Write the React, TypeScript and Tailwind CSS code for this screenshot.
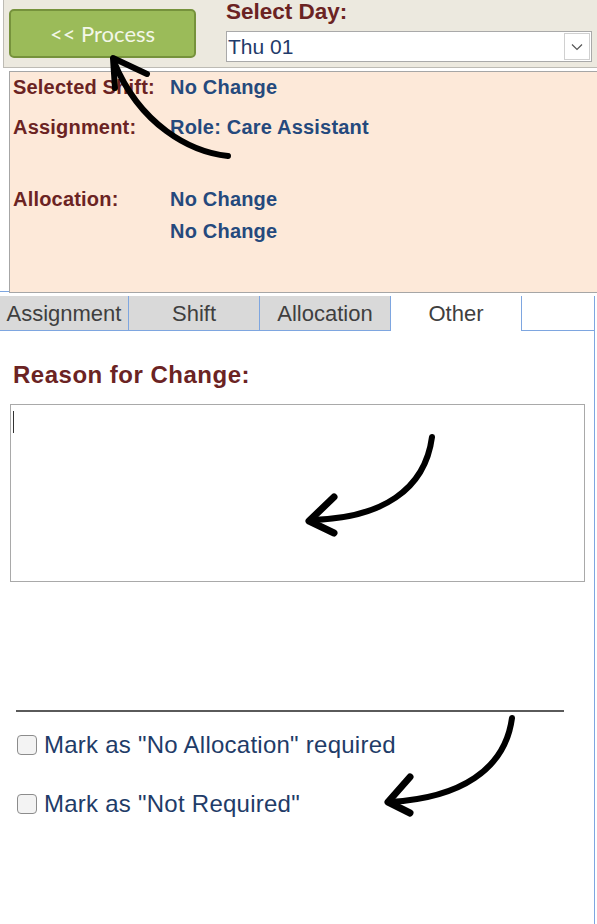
import React from "react";

const tabs = [
  { name: "Assignment", w: "w-[129px]" },
  { name: "Shift", w: "w-[131px]" },
  { name: "Allocation", w: "w-[131px]" },
];

// Annotation arrows drawn over the page
const Arrows: React.FC = () => (
  <svg
    className="pointer-events-none absolute left-0 top-0"
    width="597"
    height="924"
    viewBox="0 0 597 924"
    fill="none"
    stroke="black"
    strokeLinecap="round"
    strokeLinejoin="round"
  >
    <path d="M228 156 C 190 152, 140 125, 114 62" strokeWidth="6" />
    <path d="M147 74 L113 58 L115 88" strokeWidth="6" />
    <path d="M432 437 C 425 490, 382 518, 312 520" strokeWidth="6" />
    <path d="M334 497 L309 521 L334 533" strokeWidth="7" />
    <path d="M512 718 C 505 770, 460 798, 390 802" strokeWidth="6" />
    <path d="M410 777 L388 802 L410 813" strokeWidth="7" />
  </svg>
);

const Row: React.FC<{ label: string; value: string; className?: string }> = ({ label, value, className }) => (
  <div className={`flex h-[24px] items-center text-[20px] font-bold leading-[24px] tracking-[0.2px] ${className ?? ""}`}>
    <span className="w-[157px] shrink-0 text-[#6B2323]">{label}</span>
    <span className="text-[#25497D]">{value}</span>
  </div>
);

export default function App() {
  return (
    <div className="relative h-[924px] w-[597px] overflow-hidden bg-white font-['Liberation_Sans',Arial,sans-serif]">
      {/* Header */}
      <div className="ml-[3px] flex h-[68px] border-b border-l border-[#BDBBB4] bg-[#ECE9DF]">
        <button className="ml-[5px] mt-[9px] h-[49px] w-[187px] rounded-[5px] border-2 border-[#76923C] bg-[#9BBB59] font-['Lato',sans-serif] text-[22px] text-[#F3F7E8]">
          &lt;&lt; Process
        </button>
        <div className="ml-[30px] flex flex-col">
          <div className="h-[24px] text-[22.5px] font-bold leading-[24px] text-[#6B2323]">Select Day:</div>
          <div className="mt-[7px] flex h-[31px] w-[366px] items-center border border-[#A9A9A9] bg-white">
            <span className="flex-1 pl-[1px] text-[21px] leading-none text-[#1F3B6A]">Thu 01</span>
            <span className="mr-[1px] flex h-[27px] w-[26px] items-center justify-center border border-[#D0D0D0] bg-white">
              <svg width="12" height="8" viewBox="0 0 12 8" fill="none" stroke="#555" strokeWidth="1.2">
                <path d="M1 1.5 L6 6.5 L11 1.5" />
              </svg>
            </span>
          </div>
        </div>
      </div>

      {/* Summary panel */}
      <div className="ml-[9px] mt-[3px] h-[222px] border border-r-0 border-[#A6A6A6] bg-[#FDE9D9] pl-[3px] pt-[3px]">
        <Row label="Selected Shift:" value="No Change" />
        <Row label="Assignment:" value="Role: Care Assistant" className="mt-[16px]" />
        <Row label="Allocation:" value="No Change" className="mt-[48px]" />
        <Row label="" value="No Change" className="mt-[8px]" />
      </div>

      {/* Tabs */}
      <div className="relative mt-[3px] flex h-[35px]">
        <div className="absolute -top-[5px] left-0 h-px w-[9px] bg-[#7EA6E0]" />
        {tabs.map((t) => (
          <div
            key={t.name}
            className={`${t.w} flex items-center justify-center border-b border-r border-[#7EA6E0] bg-[#D9D9D9] text-[22px] text-[#3F3F3F]`}
          >
            {t.name}
          </div>
        ))}
        <div className="flex w-[131px] items-center justify-center border-r border-[#7EA6E0] bg-white text-[22px] text-[#3F3F3F]">
          Other
        </div>
        <div className="w-[73px] border-b border-r border-[#7EA6E0]" />
      </div>

      {/* Tab content */}
      <div className="h-[593px] w-[595px] border-r border-[#7EA6E0] pt-[31px]">
        <div className="pl-[13px] text-[24px] font-bold leading-[26px] tracking-[0.5px] text-[#6B2323]">Reason for Change:</div>
        <div className="relative ml-[10px] mt-[16px] h-[178px] w-[575px] border border-[#A9A9A9]">
          <div className="absolute left-[2px] top-[6px] h-[22px] w-px bg-[#333]" />
        </div>
        <div className="ml-[16px] mt-[128px] h-[2px] w-[548px] bg-[#5A5A5A]" />
        <label className="ml-[17px] mt-[21px] flex h-[24px] items-center gap-[7px]">
          <span className="h-[20px] w-[20px] rounded-[4px] border border-[#8C8C8C] bg-[#F3F3F3]" />
          <span className="text-[24px] leading-none tracking-[0.25px] text-[#1F3C68]">Mark as "No Allocation" required</span>
        </label>
        <label className="ml-[17px] mt-[35px] flex h-[24px] items-center gap-[7px]">
          <span className="h-[20px] w-[20px] rounded-[4px] border border-[#8C8C8C] bg-[#F3F3F3]" />
          <span className="text-[24px] leading-none tracking-[0.25px] text-[#1F3C68]">Mark as "Not Required"</span>
        </label>
      </div>

      <Arrows />
    </div>
  );
}
